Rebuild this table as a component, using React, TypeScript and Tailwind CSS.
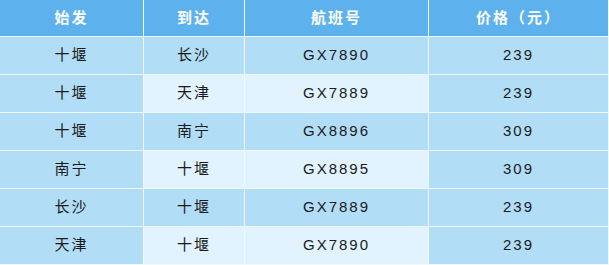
import React from "react";

const rows = [
  ["十堰", "长沙", "GX7890", "239"],
  ["十堰", "天津", "GX7889", "239"],
  ["十堰", "南宁", "GX8896", "309"],
  ["南宁", "十堰", "GX8895", "309"],
  ["长沙", "十堰", "GX7889", "239"],
  ["天津", "十堰", "GX7890", "239"],
];

const headers = ["始发", "到达", "航班号", "价格（元）"];

export default function App() {
  return (
    <div
      className="w-[609px] h-[265px] bg-[#f2f9fe] pr-px pb-px"
      style={{ fontFamily: '"Liberation Sans", "Noto Sans CJK SC", sans-serif' }}
    >
      <div className="grid grid-cols-[143px_100px_183px_179px] grid-rows-[36px_repeat(6,37px)] gap-px">
        {headers.map((h) => (
          <div
            key={h}
            className="bg-[#5db2ee] text-white font-bold text-[15px] tracking-[2px] flex items-center justify-center"
          >
            {h}
          </div>
        ))}
        {rows.map((r, i) =>
          r.map((c, j) => {
            const light = i % 2 === 1 && (j === 1 || j === 2);
            return (
              <div
                key={`${i}-${j}`}
                className={`${light ? "bg-[#e1f3fe]" : "bg-[#b2ddf6]"} text-[#1a1a1a] text-[15px] tracking-[2px] flex items-center justify-center`}
              >
                {c}
              </div>
            );
          })
        )}
      </div>
    </div>
  );
}
